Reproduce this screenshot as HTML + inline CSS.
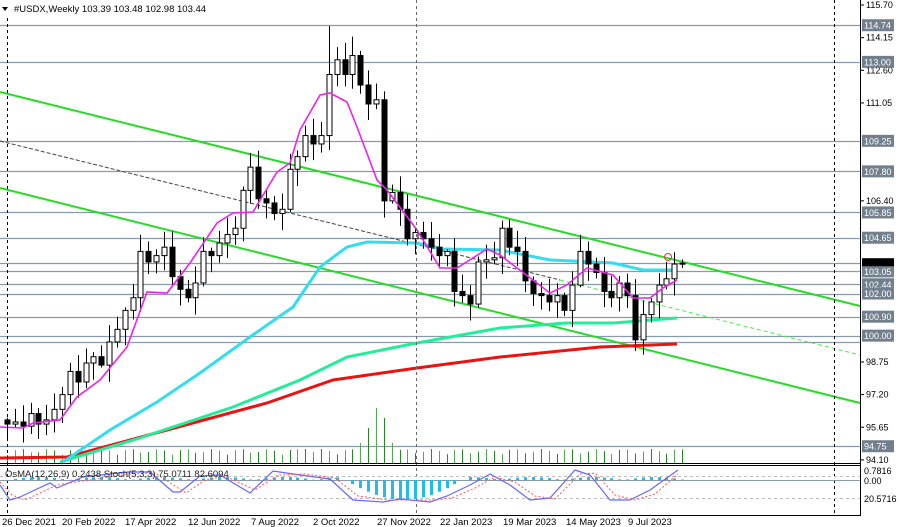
<!DOCTYPE html>
<html><head><meta charset="utf-8"><style>
html,body{margin:0;padding:0;background:#fff;width:900px;height:527px;overflow:hidden}
svg{display:block;font-family:"Liberation Sans",sans-serif}
</style></head><body>
<svg id="s" width="900" height="527" viewBox="0 0 900 527" xmlns="http://www.w3.org/2000/svg">
<rect width="900" height="527" fill="#fff"/>
<g id="hl"></g>
<g id="vol"></g>
<!-- channel lines -->
<line x1="0" y1="92" x2="860" y2="306" stroke="#22dd22" stroke-width="2"/>
<line x1="0" y1="188" x2="860" y2="403" stroke="#22dd22" stroke-width="2"/>
<line x1="0" y1="141" x2="560" y2="280" stroke="#444" stroke-width="1" stroke-dasharray="4,2"/>
<line x1="560" y1="280" x2="860" y2="355" stroke="#44ee44" stroke-width="1" stroke-dasharray="4,3"/>
<!-- MAs -->
<polyline fill="none" stroke="#ee1111" stroke-width="3" points="0,458 67,457 167,430 267,403 333,380 417,368 500,357 600,347 677,344"/>
<polyline fill="none" stroke="#22ee99" stroke-width="3" points="60,462 140,438 233,407 300,380 347,357 417,343 500,328 567,323 613,323 677,318"/>
<polyline fill="none" stroke="#33ddee" stroke-width="3" points="63,462 110,430 157,402 200,373 250,337 293,307 320,267 347,247 367,242 417,243 443,249 500,250 550,260 573,261 613,263 643,270 677,270"/>
<g id="cd"></g>
<polyline fill="none" stroke="#ee22ee" stroke-width="1.6" points="0,427 23,428 33,423 60,420 77,397 100,380 127,347 147,292 167,293 190,263 217,223 233,213 253,212 277,172 290,163 300,130 320,95 330,93 347,102 357,127 377,180 387,190 417,230 440,268 457,268 487,249 500,255 550,293 567,285 587,268 613,275 633,298 650,298 663,288 677,280"/>
<circle cx="668" cy="257" r="3.5" fill="none" stroke="#e33" stroke-width="1"/>
<!-- dashed verticals -->
<line x1="7.5" y1="0" x2="7.5" y2="515" stroke="#000" stroke-dasharray="3,3"/>
<line x1="416.5" y1="0" x2="416.5" y2="515" stroke="#666" stroke-dasharray="3,3"/>
<line x1="834.5" y1="0" x2="834.5" y2="515" stroke="#000" stroke-dasharray="3,3"/>
<!-- panels -->
<line x1="0" y1="463.5" x2="860" y2="463.5" stroke="#000"/>
<line x1="0" y1="465.5" x2="860" y2="465.5" stroke="#000"/>
<line x1="0" y1="476.5" x2="860" y2="476.5" stroke="#bbb" stroke-dasharray="3,3"/>
<line x1="0" y1="480.5" x2="860" y2="480.5" stroke="#8a9aa8"/>
<line x1="0" y1="498.5" x2="860" y2="498.5" stroke="#bbb" stroke-dasharray="3,3"/>
<g id="hist"></g>
<polyline id="st" fill="none" stroke="#6666ff" stroke-width="1.2" points="0,485 10,500 20,497 50,483 57,488 83,477 127,472 150,472 173,492 180,492 200,476 220,475 250,493 273,471 300,475 330,479 353,500 383,502 400,499 430,502 447,496 470,485 490,474 510,485 530,500 550,498 575,470 590,475 610,500 630,500 650,490 678,470"/>
<polyline fill="none" stroke="#ff5555" stroke-width="1" stroke-dasharray="2,2" points="0,482 12,495 25,500 55,486 62,484 90,480 130,474 155,473 178,488 186,493 205,480 225,476 255,490 278,475 305,474 335,478 358,496 388,500 405,500 435,500 452,498 475,488 495,477 515,482 535,496 555,499 580,474 595,473 615,495 635,500 655,494 678,474"/>
<line x1="0" y1="515.5" x2="860" y2="515.5" stroke="#000"/>
<line x1="860.5" y1="0" x2="860.5" y2="516" stroke="#000"/>
<text x="5" y="477" font-size="9.5" fill="#222">OsMA(12,26,9) 0.2438  Stoch(5,3,3) 75.0711 82.6094</text>
<!-- header -->
<rect x="0" y="0" width="250" height="16" fill="#fff"/>
<path d="M2,7 h6 l-3,4z" fill="#000"/>
<text x="14" y="12" font-size="9.5" fill="#000">#USDX,Weekly  103.39 103.48 102.98 103.44</text>
<g id="ax" font-size="9" fill="#000"></g>
<g font-size="9.5" fill="#000">
<text x="2" y="525">26 Dec 2021</text><text x="62" y="525">20 Feb 2022</text><text x="125" y="525">17 Apr 2022</text><text x="188" y="525">12 Jun 2022</text><text x="251" y="525">7 Aug 2022</text><text x="313" y="525">2 Oct 2022</text><text x="377" y="525">27 Nov 2022</text><text x="440" y="525">22 Jan 2023</text><text x="503" y="525">19 Mar 2023</text><text x="566" y="525">14 May 2023</text><text x="628" y="525">9 Jul 2023</text>
</g>
</svg>
<script>
var NS="http://www.w3.org/2000/svg";
function Y(p){return 5+(115.70-p)*21.06;}
function el(g,t,a){var e=document.createElementNS(NS,t);for(var k in a)e.setAttribute(k,a[k]);document.getElementById(g).appendChild(e);return e;}
var lv=[114.74,113.00,109.25,107.80,105.85,104.65,103.44,103.05,102.44,102.00,100.90,100.00,99.70,94.75];
lv.forEach(function(p){var y=Math.round(Y(p))+.5;el("hl","line",{x1:0,y1:y,x2:860,y2:y,stroke:"#8a9aa8","stroke-width":1.2});});
var c=[95.8,95.9,95.7,96.3,95.8,96.0,96.5,97.2,98.3,97.8,98.7,99.0,98.6,99.7,100.3,101.2,101.8,104.0,103.5,103.8,104.2,102.8,102.2,101.8,102.5,104.0,103.8,104.4,104.8,105.1,106.9,108.0,106.5,106.3,105.8,106.0,107.9,108.5,109.5,109.1,109.5,112.4,113.1,112.4,113.3,111.9,111.0,111.2,106.4,106.8,106.0,104.6,104.9,104.6,104.2,103.8,104.0,102.1,101.9,101.5,103.5,103.6,103.7,105.1,104.2,104.0,102.6,102.0,101.9,101.6,101.9,101.2,102.4,104.0,103.4,103.0,102.1,101.8,102.5,101.9,99.8,101.0,101.6,102.4,102.7,103.4,103.44];
for(var i=0;i<c.length;i++){
 var x=Math.round(7+i*7.85)+.5,o=i?c[i-1]:96.0,cl=c[i];
 var n1=Math.abs(Math.sin(i*2.3))*0.7+0.1,n2=Math.abs(Math.cos(i*1.7))*0.7+0.1;
 var h=Math.max(o,cl)+n1,l=Math.min(o,cl)-n2;
 if(i==41)h=114.7; if(i==44)h=114.2;
 el("cd","line",{x1:x,y1:Y(h),x2:x,y2:Y(l),stroke:"#000"});
 var t=Y(Math.max(o,cl)),b=Y(Math.min(o,cl));if(b-t<1)b=t+1;
 el("cd","rect",{x:x-2.5,y:t,width:5,height:b-t,fill:cl>=o?"#fff":"#000",stroke:"#000"});
 var vh=8+Math.abs(Math.sin(i*0.9))*6;
 if(i>=45&&i<=49)vh=[20,35,55,45,20][i-45];
 if(i==38)vh=14;
 el("vol","line",{x1:x,y1:463,x2:x,y2:463-vh,stroke:i%2?"#55aa55":"#228822"});
 var hv=0;
 if(i>=43&&i<=58)hv=Math.sin((i-43)/15*Math.PI)*20;
 else hv=-Math.abs(Math.sin(i*0.4))*3;
 if(hv>0)el("hist","rect",{x:x-1.5,y:480,width:3,height:hv,fill:"#22bbee"});
 else el("hist","rect",{x:x-1.5,y:480+hv,width:3,height:-hv,fill:"#22bbee"});
}
var pl=[115.70,114.15,112.60,111.05,106.40,98.75,97.20,95.65,94.10];
pl.forEach(function(p){var y=Y(p);el("ax","line",{x1:860,y1:y,x2:864,y2:y,stroke:"#000"});var t=el("ax","text",{x:866,y:y+3});t.textContent=p.toFixed(2);});
var tg=[114.74,113.00,109.25,107.80,105.85,104.65,103.05,102.44,102.00,100.90,100.00,94.75];
tg.forEach(function(p){var y=Y(p);el("ax","rect",{x:862,y:y-6,width:32,height:12,fill:"#72808e"});var t=el("ax","text",{x:864,y:y+3.5,fill:"#fff"});t.textContent=p.toFixed(2);});
var y=Y(103.44);el("ax","rect",{x:862,y:y-5,width:32,height:8,fill:"#000"});
[["0.7816",474],["0.00",484],["20.5716",502]].forEach(function(a){var t=el("ax","text",{x:864,y:a[1]});t.textContent=a[0];});
</script>
</body></html>
